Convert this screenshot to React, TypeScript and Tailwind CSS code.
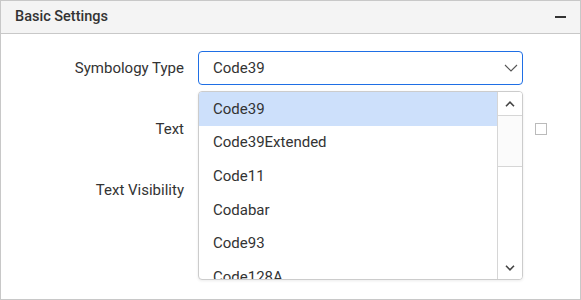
import React from 'react';

const options = ['Code39', 'Code39Extended', 'Code11', 'Codabar', 'Code93', 'Code128A'];

function Chevron({ up = false, className = '' }: { up?: boolean; className?: string }) {
  return (
    <svg width="10" height="6" viewBox="0 0 10 6" className={className}>
      <path
        d={up ? 'M1 5.2 L5 1.2 L9 5.2' : 'M1 0.8 L5 4.8 L9 0.8'}
        fill="none"
        stroke="currentColor"
        strokeWidth="1.6"
      />
    </svg>
  );
}

function Row({ label, children }: { label: string; children: React.ReactNode }) {
  return (
    <div className="flex h-[34px] items-center">
      <div className="w-[183px] text-right text-[15px] text-[#333]">{label}</div>
      <div className="ml-[14px] flex items-center">{children}</div>
    </div>
  );
}

export default function App() {
  return (
    <div
      className="relative h-[300px] w-[581px] border border-[#c8c8c8] bg-white"
      style={{ fontFamily: 'Roboto, "Liberation Sans", sans-serif' }}
    >
      <div className="flex h-[33px] items-center justify-between border-b border-[#c8c8c8] bg-[#f4f4f4] pl-[14px] pr-[14px]">
        <span className="text-[14.5px] font-medium text-[#333]">Basic Settings</span>
        <span className="block h-[2px] w-[11px] bg-[#333]" />
      </div>

      <div className="flex flex-col gap-[27px] pt-[17px]">
        <Row label="Symbology Type">
          <div className="flex h-[34px] w-[325px] items-center justify-between rounded-[4px] border border-[#1f6fe5] pl-[14px] pr-[4px] text-[15px] text-[#333]">
            <span>Code39</span>
            <svg width="14" height="8" viewBox="0 0 14 8" className="text-[#555]">
              <path d="M1 1 L7 7 L13 1" fill="none" stroke="currentColor" strokeWidth="1.1" />
            </svg>
          </div>
        </Row>
        <Row label="Text">
          <div className="h-[37px] w-[325px] rounded-[4px] border border-[#ccc]" />
          <div className="ml-[12px] h-[12px] w-[12px] border border-[#bbb] bg-white" />
        </Row>
        <Row label="Text Visibility">
          <div />
        </Row>
      </div>

      {/* dropdown popup */}
      <div className="absolute left-[197px] top-[90px] flex h-[189px] w-[325px] overflow-hidden rounded-[4px] border border-[#ccc] bg-white shadow-[0_1px_3px_rgba(0,0,0,0.08)]">
        <div className="flex-1 overflow-hidden">
          {options.map((o, i) => (
            <div
              key={o}
              className={`flex h-[33.7px] shrink-0 items-center pl-[14px] text-[15px] text-[#333] ${
                i === 0 ? 'bg-[#cde0fb]' : ''
              }`}
            >
              {o}
            </div>
          ))}
        </div>
        <div className="flex w-[25px] flex-col border-l border-[#d6d6d6] bg-white">
          <div className="flex h-[24px] items-center justify-center border-b border-[#d6d6d6]">
            <Chevron up className="text-[#444]" />
          </div>
          <div className="h-[51px] border-b border-[#d6d6d6] bg-[#fbfbfb]" />
          <div className="flex-1" />
          <div className="flex h-[22px] items-center justify-center">
            <Chevron className="text-[#444]" />
          </div>
        </div>
      </div>
    </div>
  );
}
